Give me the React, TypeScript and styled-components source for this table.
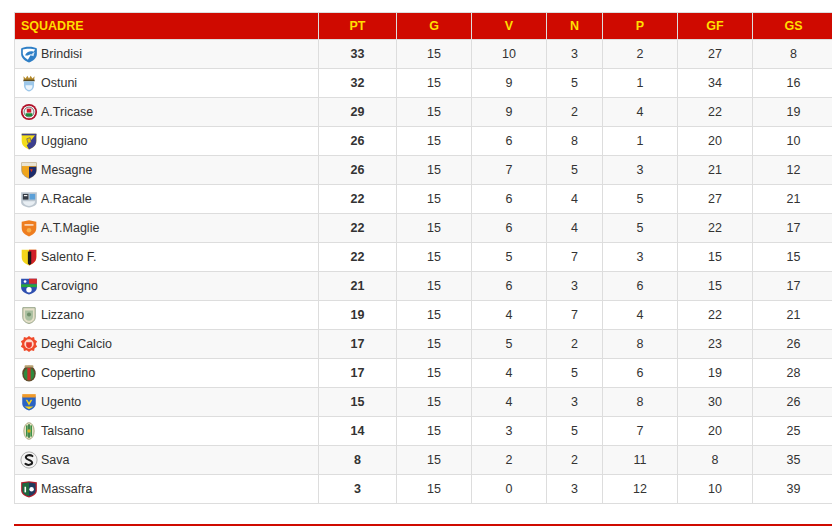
import React from 'react';
import styled, { createGlobalStyle } from 'styled-components';

const GlobalStyle = createGlobalStyle`
  html, body {
    margin: 0;
    padding: 0;
    background: #ffffff;
    overflow: hidden;
  }
  body {
    font-family: 'Liberation Sans', Arial, sans-serif;
  }
`;

const Page = styled.div`
  width: 832px;
  height: 526px;
  padding: 12px 0 0 14px;
  box-sizing: border-box;
  overflow: hidden;
`;

const Table = styled.table`
  border-collapse: collapse;
  width: 820px;
  table-layout: fixed;
  font-size: 12.5px;
  color: #333;
`;

const HeadCell = styled.th<{ $left?: boolean; $w: number }>`
  width: ${(p) => p.$w}px;
  background: #cf0a00;
  color: #ffde00;
  font-weight: bold;
  font-size: 12.5px;
  text-align: ${(p) => (p.$left ? 'left' : 'center')};
  padding: 0 6px;
  height: 27px;
  border: 1px solid #dddddd;
  box-sizing: border-box;
`;

const Row = styled.tr<{ $odd: boolean }>`
  background: ${(p) => (p.$odd ? '#f8f8f8' : '#ffffff')};
`;

const Cell = styled.td<{ $bold?: boolean }>`
  border: 1px solid #dddddd;
  text-align: center;
  padding: 0 6px;
  height: 28px;
  font-weight: ${(p) => (p.$bold ? 'bold' : 'normal')};
`;

const TeamCell = styled(Cell)`
  text-align: left;
  padding-left: 5px;
`;

const Team = styled.div`
  display: flex;
  align-items: center;
  gap: 3px;
`;

const Footer = styled.div`
  margin-top: 20px;
  height: 4px;
  background: #cf0a00;
`;

const SHIELD = 'M1.5 1.5 H14.5 V8 C14.5 12 11.5 14 8 15.5 C4.5 14 1.5 12 1.5 8 Z';

const crests: Record<string, React.ReactNode> = {
  Brindisi: (
    <>
      <path d="M1 3 C4 1 12 1 15 3 V8 C15 12 11 14.5 8 15.5 C5 14.5 1 12 1 8 Z" fill="#2f7fc6" />
      <path d="M2.5 4 C5 3 11 3 13.5 4 L12 6 C9 5 6 6 4.5 9 C6 10 8 9 10 8 L7 13 C5 12 3 10 2.5 8 Z" fill="#ffffff" />
      <path d="M9 9 L13 6 L12 10 Z" fill="#cfe3f5" />
    </>
  ),
  Ostuni: (
    <>
      <path d="M3 2 L5 4 L6.5 1.5 L8 4 L9.5 1.5 L11 4 L13 2 L12.5 5.5 H3.5 Z" fill="#b48a2c" />
      <rect x="3" y="5" width="10" height="1.5" fill="#5a4a20" />
      <path d="M3.5 6.5 H12.5 V10 C12.5 13 10.5 15 8 15.5 C5.5 15 3.5 13 3.5 10 Z" fill="#9cc7ea" />
      <path d="M5 10 H11 V11 C11 13 9.5 14 8 14.3 C6.5 14 5 13 5 11 Z" fill="#e9f3fb" />
    </>
  ),
  'A.Tricase': (
    <>
      <circle cx="8" cy="8" r="7.2" fill="#b0122a" />
      <circle cx="8" cy="8" r="5.6" fill="#ffffff" />
      <circle cx="8" cy="8" r="4.4" fill="#f2f2f2" stroke="#333" strokeWidth="0.6" />
      <path d="M5 9 H11 V11 C10 12.2 6 12.2 5 11 Z" fill="#1b8b3c" />
      <path d="M6 5 H10 V8.5 H6 Z" fill="#d21b2e" />
    </>
  ),
  Uggiano: (
    <>
      <path d={SHIELD} fill="#f3dc1a" />
      <path d="M14.5 1.5 V8 C14.5 12 11.5 14 8 15.5 L6 12 Z" fill="#3c3f8f" />
      <path d="M1.5 1.5 H14.5 V3 H1.5 Z" fill="#3c3f8f" />
      <path d="M6 6 L9 5 L10 9 L7 10 Z" fill="#e8c500" stroke="#3c3f8f" strokeWidth="0.5" />
    </>
  ),
  Mesagne: (
    <>
      <path d={SHIELD} fill="#f0a51c" stroke="#9a8a70" strokeWidth="0.6" />
      <path d="M8 5 H14.5 V8 C14.5 12 11.5 14 8 15.5 Z" fill="#1c2b6b" />
      <path d="M1.5 1.5 H14.5 V4.5 H1.5 Z" fill="#e9e4d4" />
      <path d="M9 7 L11.5 7.5 L10 10 Z" fill="#d8361a" />
    </>
  ),
  'A.Racale': (
    <>
      <path d="M1 2 H15 V11 C15 13 12 15 8 15.5 C4 15 1 13 1 11 Z" fill="#bcc6cf" />
      <rect x="2.5" y="3.5" width="5" height="5" fill="#333a44" />
      <rect x="8.5" y="3.5" width="5" height="5" fill="#5ba0d8" />
      <path d="M2.5 10 H13.5 C13 12.5 11 14 8 14.2 C5 14 3 12.5 2.5 10 Z" fill="#e8eef3" />
      <rect x="3.5" y="4.5" width="3" height="1" fill="#ffffff" />
    </>
  ),
  'A.T.Maglie': (
    <>
      <path d="M1.5 2.5 L8 1 L14.5 2.5 V8 C14.5 12 11.5 14 8 15.5 C4.5 14 1.5 12 1.5 8 Z" fill="#ee7d1f" />
      <rect x="4" y="4.5" width="8" height="1.5" fill="#ffffff" opacity="0.7" />
      <circle cx="8" cy="10" r="2" fill="#f6b04a" />
    </>
  ),
  'Salento F.': (
    <>
      <path d={SHIELD} fill="#f3d51c" />
      <path d="M8 1.5 H14.5 V8 C14.5 12 11.5 14 8 15.5 Z" fill="#d1202a" />
      <path d="M7 3 H10 V14 L8.5 15 L7 14 Z" fill="#1a1a1a" />
    </>
  ),
  Carovigno: (
    <>
      <path d="M1 1.5 H15 V9 C15 12.5 11.5 14.5 8 15.5 C4.5 14.5 1 12.5 1 9 Z" fill="#2e4fb0" />
      <path d="M8 1.5 H15 V6 H8 Z" fill="#d42b2b" />
      <rect x="1" y="6.5" width="14" height="2.5" fill="#2aa63a" />
      <circle cx="8" cy="11.3" r="2.4" fill="#ffffff" />
      <circle cx="4.5" cy="4" r="1.2" fill="#ffffff" />
    </>
  ),
  Lizzano: (
    <>
      <path d="M2.5 1.5 H13.5 V10 C13.5 13 11 15 8 15.5 C5 15 2.5 13 2.5 10 Z" fill="#e3dfc8" stroke="#8a9a7a" strokeWidth="0.8" />
      <path d="M4.5 4 H11.5 V9.5 C11.5 11.5 10 12.8 8 13.2 C6 12.8 4.5 11.5 4.5 9.5 Z" fill="#a9bfa0" />
      <circle cx="8" cy="7.5" r="1.8" fill="#6f8f6a" />
    </>
  ),
  'Deghi Calcio': (
    <>
      <path d="M8 0.8 L10 2.5 L12.5 1.8 L13 4.3 L15.2 5.5 L14 8 L15.2 10.5 L13 11.7 L12.5 14.2 L10 13.5 L8 15.2 L6 13.5 L3.5 14.2 L3 11.7 L0.8 10.5 L2 8 L0.8 5.5 L3 4.3 L3.5 1.8 L6 2.5 Z" fill="#f04a2a" />
      <circle cx="8" cy="8" r="4.2" fill="#ffd9cc" />
      <path d="M5.5 6.5 H10.5 V9 C10.5 10.5 9.3 11.3 8 11.5 C6.7 11.3 5.5 10.5 5.5 9 Z" fill="#e8382a" />
    </>
  ),
  Copertino: (
    <>
      <ellipse cx="8" cy="8.5" rx="6" ry="7" fill="#5b4a2a" />
      <ellipse cx="8" cy="9" rx="4.6" ry="5.6" fill="#2e8a3e" />
      <path d="M6.5 3.5 H9.5 V14.5 H6.5 Z" fill="#c8302a" />
      <rect x="4" y="1.2" width="8" height="2" rx="1" fill="#b8a070" />
    </>
  ),
  Ugento: (
    <>
      <path d="M2 3 H14 V9 C14 12.5 11 14.5 8 15.5 C5 14.5 2 12.5 2 9 Z" fill="#2a63c4" />
      <path d="M2 1 H14 V4 H2 Z" fill="#f09a2a" />
      <path d="M5 6 L8 11 L11 6 L9.5 6 L8 8.5 L6.5 6 Z" fill="#f5d21a" />
      <path d="M4 12 H12 L8 14.5 Z" fill="#f5d21a" />
    </>
  ),
  Talsano: (
    <>
      <ellipse cx="8" cy="8" rx="4.6" ry="7.4" fill="#e9e4c6" stroke="#8a8a5a" strokeWidth="0.6" />
      <rect x="5.4" y="3" width="1.4" height="10" fill="#2e8a3e" />
      <rect x="9.2" y="3" width="1.4" height="10" fill="#2e8a3e" />
      <rect x="7.3" y="2" width="1.4" height="12" fill="#1f6a2e" />
      <circle cx="8" cy="8" r="1.5" fill="#d8b020" />
    </>
  ),
  Sava: (
    <>
      <circle cx="8" cy="8" r="7.2" fill="#f4f4f4" stroke="#9a9a9a" strokeWidth="0.7" />
      <path d="M11 4.5 C9 3 5 3.6 5.2 6 C5.4 8 10.8 7.8 10.8 10.3 C10.8 12.6 6.5 13 4.8 11.4" fill="none" stroke="#1a1a1a" strokeWidth="1.8" strokeLinecap="round" />
    </>
  ),
  Massafra: (
    <>
      <path d="M1 2 L8 1 L15 2 V9 C15 12.5 11.5 14.5 8 15.5 C4.5 14.5 1 12.5 1 9 Z" fill="#b0202e" />
      <path d="M2.2 3 L8 2.2 L13.8 3 V9 C13.8 11.8 11 13.5 8 14.3 C5 13.5 2.2 11.8 2.2 9 Z" fill="#1f3a5e" />
      <path d="M2.2 3 L8 2.2 V14.3 C5 13.5 2.2 11.8 2.2 9 Z" fill="#1f6a3e" />
      <circle cx="10.3" cy="8.3" r="2" fill="#ffffff" />
      <rect x="4" y="6" width="1.4" height="5" fill="#ffffff" />
    </>
  ),
};

const Crest = ({ name }: { name: string }) => (
  <svg width="18" height="18" viewBox="0 0 16 16" style={{ flexShrink: 0 }}>
    {crests[name]}
  </svg>
);

type Standing = [string, number, number, number, number, number, number, number];

const standings: Standing[] = [
  ['Brindisi', 33, 15, 10, 3, 2, 27, 8],
  ['Ostuni', 32, 15, 9, 5, 1, 34, 16],
  ['A.Tricase', 29, 15, 9, 2, 4, 22, 19],
  ['Uggiano', 26, 15, 6, 8, 1, 20, 10],
  ['Mesagne', 26, 15, 7, 5, 3, 21, 12],
  ['A.Racale', 22, 15, 6, 4, 5, 27, 21],
  ['A.T.Maglie', 22, 15, 6, 4, 5, 22, 17],
  ['Salento F.', 22, 15, 5, 7, 3, 15, 15],
  ['Carovigno', 21, 15, 6, 3, 6, 15, 17],
  ['Lizzano', 19, 15, 4, 7, 4, 22, 21],
  ['Deghi Calcio', 17, 15, 5, 2, 8, 23, 26],
  ['Copertino', 17, 15, 4, 5, 6, 19, 28],
  ['Ugento', 15, 15, 4, 3, 8, 30, 26],
  ['Talsano', 14, 15, 3, 5, 7, 20, 25],
  ['Sava', 8, 15, 2, 2, 11, 8, 35],
  ['Massafra', 3, 15, 0, 3, 12, 10, 39],
];

const columns: { label: string; width: number }[] = [
  { label: 'SQUADRE', width: 304 },
  { label: 'PT', width: 78 },
  { label: 'G', width: 75 },
  { label: 'V', width: 75 },
  { label: 'N', width: 56 },
  { label: 'P', width: 75 },
  { label: 'GF', width: 75 },
  { label: 'GS', width: 82 },
];

export default function App() {
  return (
    <Page>
      <GlobalStyle />
      <Table>
        <thead>
          <tr>
            {columns.map((c, i) => (
              <HeadCell key={c.label} $w={c.width} $left={i === 0}>
                {c.label}
              </HeadCell>
            ))}
          </tr>
        </thead>
        <tbody>
          {standings.map(([name, ...stats], i) => (
            <Row key={name} $odd={i % 2 === 0}>
              <TeamCell>
                <Team>
                  <Crest name={name} />
                  {name}
                </Team>
              </TeamCell>
              {stats.map((v, j) => (
                <Cell key={j} $bold={j === 0}>
                  {v}
                </Cell>
              ))}
            </Row>
          ))}
        </tbody>
      </Table>
      <Footer />
    </Page>
  );
}
